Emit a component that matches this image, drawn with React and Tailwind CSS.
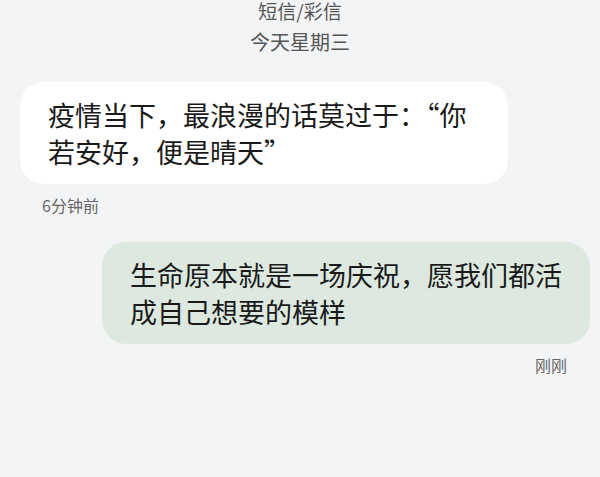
export default function App() {
  return (
    <div className="min-h-[477px] w-[600px] overflow-hidden bg-[#f3f4f6] font-['Noto_Sans_CJK_SC',sans-serif]">
      <div className="flex flex-col items-center text-[#555]">
        <div className="text-[19px] leading-[22px]">短信/彩信</div>
        <div className="mt-[9px] text-[20px] leading-[22px]">今天星期三</div>
      </div>

      <div className="ml-[20px] mt-[29px] w-[488px] rounded-[24px] bg-white py-[14px] pl-[28px] pr-[36px] text-[27px] leading-[37px] text-[#1a1a1a]">
        疫情当下，最浪漫的话莫过于：“你若安好，便是晴天”
      </div>
      <div className="ml-[42px] mt-[11px] text-[16px] leading-[20px] text-[#666]">6分钟前</div>

      <div className="ml-[102px] mt-[27px] w-[488px] rounded-[24px] bg-[#dde9e0] py-[14px] pl-[28px] pr-[20px] text-[27px] leading-[37px] text-[#1a1a1a]">
        生命原本就是一场庆祝，愿我们都活成自己想要的模样
      </div>
      <div className="mr-[33px] mt-[11px] text-right text-[16px] leading-[20px] text-[#666]">刚刚</div>
    </div>
  );
}
